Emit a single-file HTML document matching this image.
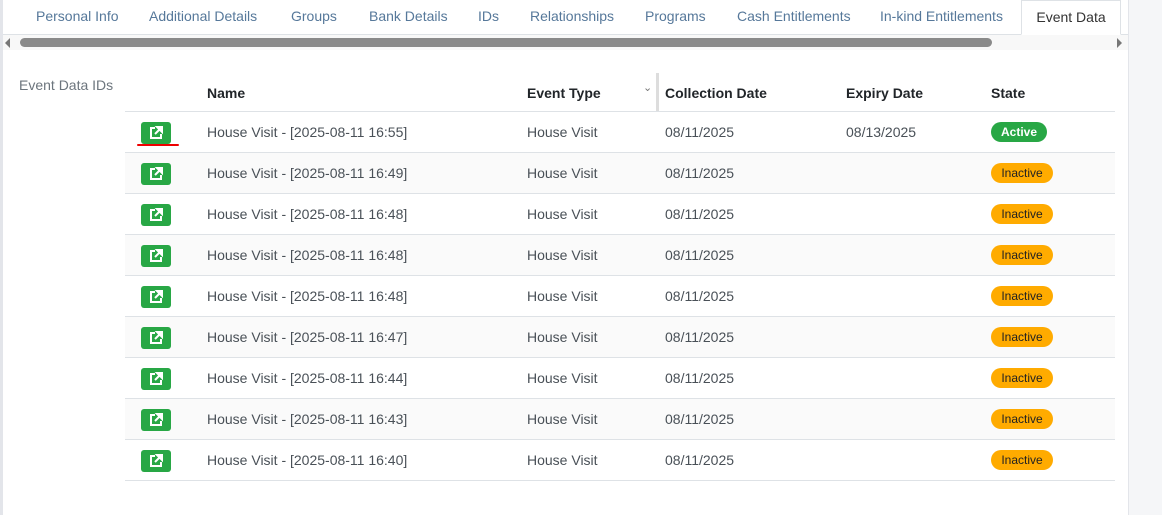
<!DOCTYPE html>
<html><head><meta charset="utf-8"><style>
*{margin:0;padding:0;box-sizing:border-box}
body{width:1162px;height:515px;overflow:hidden;background:#f5f6f8;font-family:"Liberation Sans",sans-serif;position:relative}
.panel{position:absolute;left:0;top:0;width:1129px;height:515px;background:#fff;border-left:3px solid #e3e5ea;border-right:1px solid #e3e5ea}
.tabs{position:absolute;left:0;top:0;width:1125px;height:35px;border-bottom:1px solid #dee2e6}
.tab{position:absolute;top:8px;font-size:14px;color:#56789a}
.tab.act{top:0;height:35px;left:1018px;width:100px;border:1px solid #dee2e6;border-bottom:1px solid #fff;background:#fff;color:#333;padding-top:8px;text-align:center}
.track{position:absolute;left:0;top:35px;width:1125px;height:15px;background:#f8f8f8}
.thumb{position:absolute;left:17px;top:3px;width:972px;height:9px;border-radius:5px;background:#8a8a8a}
.la{position:absolute;left:2px;top:3px;border:5px solid transparent;border-right:5px solid #777;border-left:0}
.ra{position:absolute;left:1114px;top:3px;border:5px solid transparent;border-left:5px solid #777;border-right:0}
.lbl{position:absolute;left:16px;top:77px;font-size:14px;color:#6c757d}
.row{position:absolute;left:122px;width:990px;height:41px;border-bottom:1px solid #dee2e6;font-size:14px;color:#495057}
.row.s{background:#fafafa}
.row span{position:absolute;top:12px}
.hd span{font-weight:bold;color:#212529}
.btn{position:absolute;left:16px;top:10px;width:30px;height:22px;background:#28a745;border-radius:3px}
.btn svg{position:absolute;left:8px;top:4px}
.bd{position:absolute;left:866px;top:10px;height:20px;border-radius:10px;font-size:12px;font-weight:bold;padding-top:3px;color:#fff}
.in{background:#ffab00;color:#222;font-weight:normal;width:62px;text-align:center}
.ac{background:#28a745;width:56px;text-align:center}
</style></head><body>
<div class="panel">
<div class="tabs">
<span class="tab" style="left:33px">Personal Info</span>
<span class="tab" style="left:146px">Additional Details</span>
<span class="tab" style="left:288px">Groups</span>
<span class="tab" style="left:366px">Bank Details</span>
<span class="tab" style="left:475px">IDs</span>
<span class="tab" style="left:527px">Relationships</span>
<span class="tab" style="left:642px">Programs</span>
<span class="tab" style="left:734px">Cash Entitlements</span>
<span class="tab" style="left:877px">In-kind Entitlements</span>
<span class="tab act">Event Data</span>
</div>
<div class="track"><div class="la"></div><div class="thumb"></div><div class="ra"></div></div>
<div class="lbl">Event Data IDs</div>
<div class="row hd" style="top:71px"><span style="left:82px;top:14px">Name</span><span style="left:402px;top:14px">Event Type</span><span style="left:518px;top:10px;font-weight:normal;color:#777;font-size:11px">&#8964;</span><div style="position:absolute;left:531px;top:2px;width:3px;height:38px;background:#ddd"></div><span style="left:540px;top:14px">Collection Date</span><span style="left:721px;top:14px">Expiry Date</span><span style="left:866px;top:14px">State</span></div>
<div id="rows"></div>
<div style="position:absolute;left:134px;top:144px;width:42px;height:2px;background:#e00;border-radius:1px"></div>
</div>
<script>
var t=["16:55","16:49","16:48","16:48","16:48","16:47","16:44","16:43","16:40"],h="";
var ic='<svg width="14" height="14" viewBox="0 0 14 14"><path d="M6 2H2v10h10V8" fill="none" stroke="#fff" stroke-width="2"/><path d="M8 1h5v5z M12 2L6 8" fill="#fff" stroke="#fff" stroke-width="2"/></svg>';
for(var i=0;i<9;i++){h+='<div class="row'+(i%2?' s':'')+'" style="top:'+(112+i*41)+'px"><div class="btn">'+ic+'</div><span style="left:82px">House Visit - [2025-08-11 '+t[i]+']</span><span style="left:402px">House Visit</span><span style="left:540px">08/11/2025</span>'+(i==0?'<span style="left:721px">08/13/2025</span><div class="bd ac">Active</div>':'<div class="bd in">Inactive</div>')+'</div>';}
document.getElementById('rows').outerHTML=h;
</script>
</body></html>
